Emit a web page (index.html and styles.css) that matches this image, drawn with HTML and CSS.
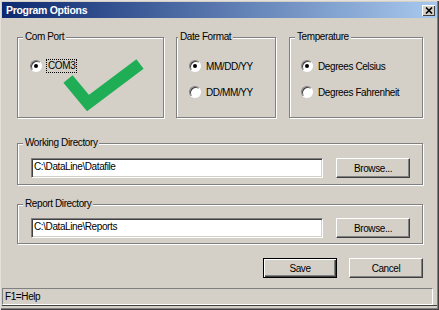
FILE: index.html
```html
<!DOCTYPE html>
<html lang="en">
<head>
  <meta charset="UTF-8" />
  <title>Program Options</title>
  <link rel="stylesheet" href="styles.css">
</head>
<body>

<div class="window">
  <div class="titlebar">
    <span class="title">Program Options</span>
    <span class="close-btn">
      <svg width="8" height="7" viewBox="0 0 8 7"><path d="M1 0.5 L7 6.5 M7 0.5 L1 6.5" stroke="#000" stroke-width="1.6"/></svg>
    </span>
  </div>

  <div class="content">
    <!-- option groups -->
    <div class="top-row">
      <div class="group com-port">
        <div class="caption">Com Port</div>
        <div class="radio-row first"><span class="radio checked"></span><span class="focus">COM3</span></div>
        <svg class="check" width="95" height="60" viewBox="0 0 95 60">
          <polyline points="13,24 33,48 85,9" fill="none" stroke="#1fae55" stroke-width="12" stroke-linejoin="miter" stroke-linecap="butt"/>
        </svg>
      </div>

      <div class="group date-format">
        <div class="caption">Date Format</div>
        <div class="radio-row first"><span class="radio checked"></span><span class="text">MM/DD/YY</span></div>
        <div class="radio-row"><span class="radio"></span><span class="text">DD/MM/YY</span></div>
      </div>

      <div class="group temperature">
        <div class="caption">Temperature</div>
        <div class="radio-row first"><span class="radio checked"></span><span class="text">Degrees Celsius</span></div>
        <div class="radio-row"><span class="radio"></span><span class="text">Degrees Fahrenheit</span></div>
      </div>
    </div>

    <!-- directories -->
    <div class="group dir working">
      <div class="caption">Working Directory</div>
      <div class="dir-row">
        <div class="textbox">C:\DataLine\Datafile</div>
        <button class="btn">Browse...</button>
      </div>
    </div>

    <div class="group dir report">
      <div class="caption">Report Directory</div>
      <div class="dir-row">
        <div class="textbox">C:\DataLine\Reports</div>
        <button class="btn">Browse...</button>
      </div>
    </div>

    <div class="actions">
      <button class="btn default">Save</button>
      <button class="btn">Cancel</button>
    </div>
  </div>

  <div class="statusbar">
    <div class="panel">F1=Help</div>
    <div class="grip"></div>
  </div>
</div>

</body>
</html>
```

FILE: styles.css
```css
body {
  margin: 0;
  background: #d4d0c8;
  font-family: "Liberation Sans", Arial, sans-serif;
  font-size: 10px;
  letter-spacing: -0.4px;
  color: #000;
}

.window {
  width: 439px;
  height: 310px;
  box-sizing: border-box;
  padding-top: 2px;
  background: #d4d0c8;
  box-shadow: inset 1px 1px 0 #e4e1dc, inset -1px -1px 0 #404040, inset -2px -2px 0 #808080;
  overflow: hidden;
}

.titlebar {
  height: 16px;
  margin: 0 2px;
  display: flex;
  align-items: center;
  background: linear-gradient(to right, #0c2870, #a8c9ee);
}

.title {
  padding-left: 4px;
  color: #fff;
  font-weight: bold;
  font-size: 10.5px;
  letter-spacing: -0.3px;
  flex: 1;
}

.close-btn {
  width: 13px;
  height: 11px;
  margin-right: 2px;
  display: flex;
  align-items: center;
  justify-content: center;
  background: #d4d0c8;
  box-shadow: inset 1px 1px 0 #fff, inset -1px -1px 0 #404040;
}

.content {
  padding: 0 16px 0 17px;
}

/* etched group box */
.group {
  box-sizing: border-box;
  border: 1px solid #808080;
  box-shadow: inset 1px 1px 0 #fff, 1px 1px 0 #fff;
  position: relative;
}

.caption {
  width: fit-content;
  height: 12px;
  line-height: 12px;
  margin: -7px 0 0 5px;
  padding: 0 2px;
  background: #d4d0c8;
}

.date-format .caption { margin-left: 1px; }

.top-row {
  display: flex;
  margin-top: 19px;
}

.top-row .group { height: 81px; }
.com-port { width: 147px; margin-right: 12px; }
.date-format { width: 100px; margin-right: 13px; }
.temperature { width: 134px; }

.radio-row {
  display: flex;
  align-items: center;
  height: 14px;
  margin: 12px 0 0 12px;
  gap: 3px;
}

.radio-row.first { margin-top: 16px; }
.temperature .radio-row { margin-left: 11px; }

.radio {
  width: 12px;
  height: 12px;
  box-sizing: border-box;
  border-radius: 50%;
  background: #fff;
  border: 1px solid;
  border-color: #808080 #fff #fff #808080;
  box-shadow: inset 1px 1px 0 #404040;
  display: flex;
  align-items: center;
  justify-content: center;
}

.radio.checked::after {
  content: "";
  width: 4px;
  height: 4px;
  border-radius: 50%;
  background: #000;
}

.text { padding: 0 2px; }

.focus {
  margin-left: 1px;
  padding: 0 1px;
  line-height: 12px;
  border: 1px dotted #000;
}

.check {
  position: absolute;
  left: 37px;
  top: 17px;
}

.dir { width: 406px; }
.working { margin-top: 25px; height: 42px; }
.report { margin-top: 19px; height: 40px; }

.dir-row {
  display: flex;
  gap: 13px;
  padding-left: 13px;
  margin-top: 9px;
}

.report .dir-row { margin-top: 8px; }

.textbox {
  width: 292px;
  height: 20px;
  box-sizing: border-box;
  padding: 0 2px;
  line-height: 16px;
  background: #fff;
  border: 1px solid;
  border-color: #808080 #fff #fff #808080;
  box-shadow: inset 1px 1px 0 #404040, inset -1px -1px 0 #d4d0c8;
}

.btn {
  width: 74px;
  height: 20px;
  box-sizing: border-box;
  padding: 0;
  font: inherit;
  letter-spacing: inherit;
  color: #000;
  background: #d4d0c8;
  border: 1px solid;
  border-color: #fff #404040 #404040 #fff;
  box-shadow: inset -1px -1px 0 #808080;
}

.btn.default {
  border: 1px solid #000;
  box-shadow: inset 1px 1px 0 #fff, inset -1px -1px 0 #404040, inset -2px -2px 0 #808080;
}

.actions {
  display: flex;
  justify-content: flex-end;
  gap: 12px;
  margin-top: 14px;
}

.statusbar {
  display: flex;
  margin: 10px 2px 0 2px;
  height: 17px;
  border-bottom: 1px solid #404040;
}

.panel {
  flex: 1;
  box-sizing: border-box;
  padding-left: 2px;
  line-height: 15px;
  border: 1px solid;
  border-color: #808080 #fff #fff #808080;
}

.grip {
  width: 4px;
}
```
